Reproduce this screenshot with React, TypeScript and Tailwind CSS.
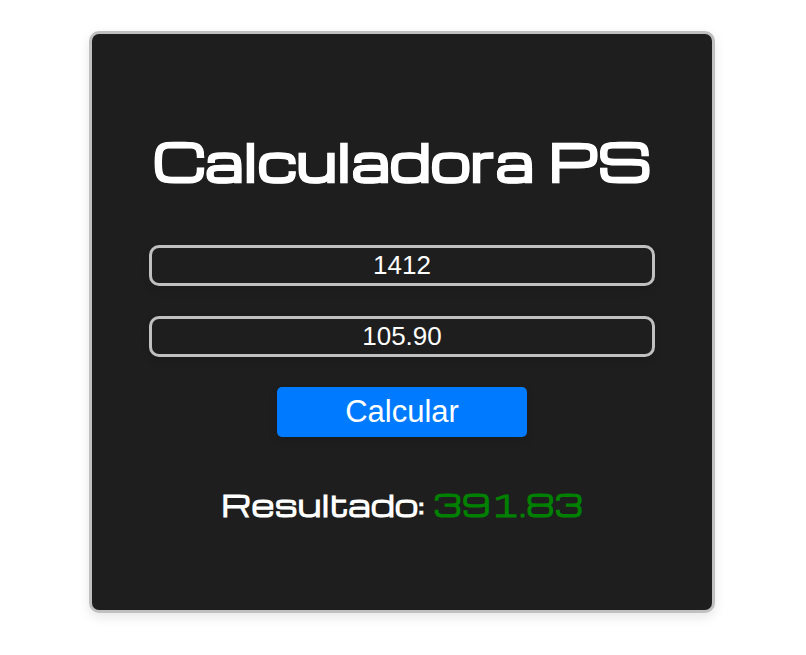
import { useState } from "react";

const inputClass =
  "h-[41px] w-full rounded-[10px] border-3 border-[#c0c0c0] bg-transparent text-center font-['Liberation_Sans',Arial,sans-serif] text-[26px] leading-8 text-white shadow-[0_4px_8px_rgba(0,0,0,0.1)] outline-none";

export default function App() {
  const [base, setBase] = useState("1412");
  const [amount, setAmount] = useState("105.90");
  return (
    <main className="flex justify-center bg-white pt-[31px] pr-[91px] pb-10 pl-[89px] font-[Michroma,'DejaVu_Sans',sans-serif]">
      <form
        onSubmit={(e) => e.preventDefault()}
        className="flex w-full max-w-2xl flex-col items-center gap-[30px] rounded-[10px] border-3 border-[#c0c0c0] bg-[#1e1e1e] px-[57px] pt-20 pb-[81px] shadow-[0_4px_12px_rgba(0,0,0,0.1)]"
      >
        <h1 className="pb-[9px] text-center text-[51px] leading-[92px] font-bold whitespace-nowrap text-white [-webkit-text-stroke:1px_white]">
          Calculadora PS
        </h1>
        <input aria-label="Salário" className={inputClass} value={base} onChange={(e) => setBase(e.target.value)} />
        <input aria-label="Desconto" className={inputClass} value={amount} onChange={(e) => setAmount(e.target.value)} />
        <button className="h-[50px] w-[250px] rounded-[5px] bg-[#007bff] pb-0.5 font-['Liberation_Sans',Arial,sans-serif] text-[31px] leading-none text-white shadow-[0_4px_8px_rgba(0,0,0,0.1)]">
          Calcular
        </button>
        <p className="pt-3 text-center text-[30px] leading-[50px] font-bold whitespace-nowrap text-white">
          Resultado: <output className="text-[#008000]">391.83</output>
        </p>
      </form>
    </main>
  );
}
